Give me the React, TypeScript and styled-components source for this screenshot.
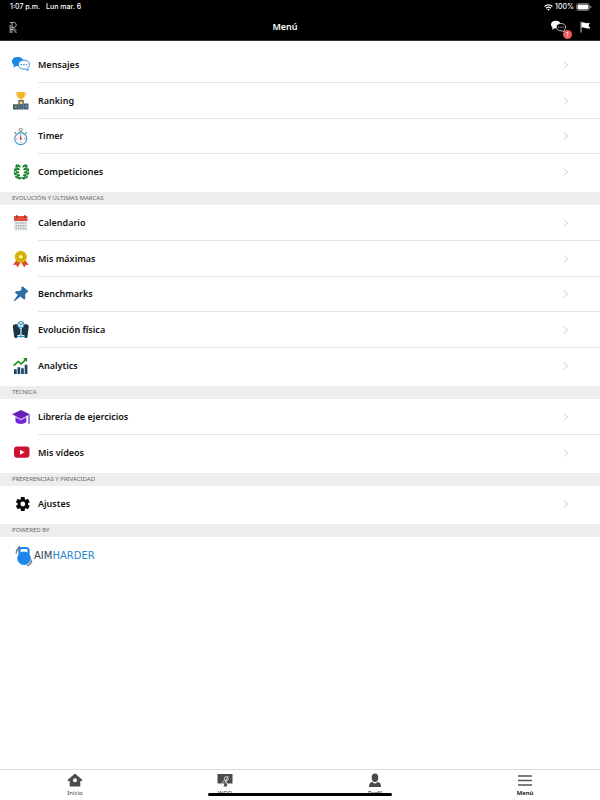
import React from "react";
import styled, { createGlobalStyle } from "styled-components";

const GlobalStyle = createGlobalStyle`
  * { box-sizing: border-box; }
  body { margin: 0; background: #fff; font-family: "Noto Sans", "Open Sans", sans-serif; color: #111; }
  a { color: inherit; text-decoration: none; }
  svg { display: block; }
`;

const Page = styled.div`
  min-height: 100vh;
  display: flex;
  flex-direction: column;
`;
const Header = styled.header`
  background: #000;
  color: #fff;
  border-bottom: 1px solid #333;
`;
const StatusBar = styled.div`
  display: flex;
  align-items: center;
  height: 14px;
  padding: 0 8px 0 10px;
  font: 500 7px/14px Inter, sans-serif;
`;
const StatusDate = styled.span`
  margin-left: 6px;
  flex: 1;
`;
const StatusIcons = styled.div`
  display: flex;
  align-items: center;
  gap: 2px;
`;
const TitleBar = styled.div`
  display: grid;
  grid-template-columns: 1fr auto 1fr;
  align-items: center;
  height: 26px;
  padding: 0 9px;
`;
const Title = styled.h1`
  margin: 0;
  padding-right: 30px;
  font-size: 9px;
  line-height: 14px;
  font-weight: 600;
`;
const HeaderActions = styled.div`
  display: flex;
  justify-content: flex-end;
  align-items: center;
  gap: 14px;
`;
const IconButton = styled.button`
  position: relative;
  display: block;
  padding: 0;
  border: 0;
  background: none;
  color: #fff;
`;
const BrandButton = styled(IconButton)`
  justify-self: start;
`;
const Badge = styled.span`
  position: absolute;
  right: -6px;
  bottom: -4px;
  width: 9px;
  height: 9px;
  border-radius: 50%;
  background: #f0595d;
  font: 400 7px/9px "Open Sans", sans-serif;
  text-align: center;
`;
const Content = styled.main`
  flex: 1;
`;
const Group = styled.ul<{ $first?: boolean }>`
  list-style: none;
  margin: 0;
  padding: ${(p) => (p.$first ? 6 : 0)}px 0 3px;
`;
const RowLink = styled.a`
  display: flex;
  align-items: center;
  height: 36px;
  padding-left: 12px;
`;
const RowBody = styled.span`
  flex: 1;
  align-self: stretch;
  display: flex;
  align-items: center;
  justify-content: space-between;
  margin-left: 8px;
  padding-right: 30px;
  border-bottom: 1px solid #e4e4e4;
  font-size: 9px;
  line-height: 14px;
  font-weight: 600;
  color: #111;
`;
const Item = styled.li`
  &:nth-child(3n) ${RowLink}, &:last-child ${RowLink} { height: 35px; }
  &:last-child ${RowBody} { border-bottom: 0; }
`;
const SectionTitle = styled.h2`
  margin: 0;
  padding-left: 12px;
  background: #ededed;
  color: #666;
  font-size: 6px;
  line-height: 13px;
  font-weight: 400;
  text-transform: uppercase;
`;
const Powered = styled.a`
  display: inline-block;
  margin: 8px 0 0 15px;
`;
const TabBar = styled.nav`
  position: sticky;
  bottom: 0;
  display: grid;
  grid-template-columns: repeat(4, 1fr);
  height: 31px;
  border-top: 1px solid #dcdcdc;
  background: #fff;
`;
const Tab = styled.a<{ $active?: boolean }>`
  display: flex;
  flex-direction: column;
  align-items: center;
  padding-top: 3px;
  font-size: 6px;
  line-height: 8px;
  font-weight: ${(p) => (p.$active ? 600 : 400)};
  color: ${(p) => (p.$active ? "#000" : "#333")};
`;
const HomeIndicator = styled.div`
  position: absolute;
  left: 50%;
  bottom: 4px;
  width: 184px;
  height: 3px;
  margin-left: -92px;
  border-radius: 2px;
  background: #000;
`;

const Icon = ({ children, size = 18 }: { children: React.ReactNode; size?: number }) => (
  <svg width={size} height={size} viewBox="0 0 18 18" fill="none" aria-hidden="true">
    {children}
  </svg>
);

const Bubbles = ({ main, outline, back, size }: { main: string; outline: string; back: string; size?: number }) => (
  <Icon size={size}>
    <path d="M5.500 1C2.200 1 0 3 0 5.500c0 1.500.8 2.700 1.800 3.500L1.300 11.800 4.300 10h3.500l3.700-4.500C11.500 3 9 1 5.500 1z" fill={main} />
    <path d="M12 4.200c3.300 0 5.500 1.800 5.500 4.400 0 1.400-.7 2.500-1.800 3.300l.5 2.700-3-1.600c-4 .4-6.900-1.600-6.900-4.400 0-2.600 2.400-4.400 5.700-4.400z" fill={back} stroke={outline} strokeWidth="1" />
    <path d="M8.700 8.600h1.300m1.300 0h1.300m1.300 0h1.300" stroke={outline} strokeWidth="1.200" />
  </Icon>
);

const Podium = () => (
  <Icon>
    <path d="M5.500 0h7v4.500c0 3-7 3-7 0zM8.200 6h1.600v2H8.200z" fill="#f5b62a" />
    <path d="M6 1H4.300c0 2 .7 3 2.200 3M12 1h1.700c0 2-.7 3-2.200 3" stroke="#f5b62a" />
    <path d="M6.300 8h5.500v9.500H6.300z" fill="#536674" />
    <path d="M1 12.300h5.500v5.200H1z" fill="#405463" />
    <path d="M11.800 11.500H16.500v6h-4.700z" fill="#465f79" />
    <circle cx="9.100" cy="10.700" r="1.600" fill="#ffd54a" />
    <circle cx="3.700" cy="14.700" r="1.200" fill="#73b66b" />
    <circle cx="14.200" cy="14.200" r="1.200" fill="#5c8eb9" />
  </Icon>
);
const Stopwatch = () => (
  <Icon>
    <circle cx="8.700" cy="1.700" r="1.600" stroke="#666" strokeWidth=".8" />
    <path d="M8.700 3.200V4.500M2.700 4.500l1.200 1M14.700 4.500l-1.200 1" stroke="#3a718e" strokeWidth="1.200" />
    <circle cx="8.700" cy="10.700" r="6" fill="#f4fafc" stroke="#4a9ac5" strokeWidth="1.200" />
    <path d="M8.700 6.200v1.200M8.700 14v1.200M4.200 10.700h1.200m6.600 0h1.200" stroke="#66777e" strokeWidth=".7" />
    <path d="M8.700 7.500v3.700" stroke="#d43b3b" />
    <circle cx="8.700" cy="10.700" r="1.100" fill="#c44" />
  </Icon>
);
const leaves: [number, number, number][] = [
  [7, 3, -50], [4.500, 3, 25], [6, 6, -65], [3, 6.800, 0], [5.500, 9.300, -80],
  [3, 10.800, -35], [6.300, 12.200, -95], [4.800, 14.300, -70], [7.800, 15.300, -105],
];
const Laurel = () => (
  <Icon>
    {[false, true].map((flip) => (
      <g key={String(flip)} transform={flip ? "translate(19 0) scale(-1 1)" : undefined}>
        <path d="M7 2.300C3 6 3.500 12.500 8.800 15.500" stroke="#188a24" strokeWidth="1" />
        {leaves.map(([x, y, r], i) => (
          <ellipse key={i} cx={x} cy={y} rx="1" ry="1.900" fill="#128020" transform={`rotate(${r} ${x} ${y})`} />
        ))}
      </g>
    ))}
  </Icon>
);
const CalendarIcon = () => (
  <Icon>
    <path d="M2 5h13.500v11.500H2z" fill="#e6eaeb" />
    <path d="M2 2h13.500v5H2z" fill="#e14b3b" />
    <path d="M4.800 1v3m8-3v3" stroke="#9d2c24" strokeWidth="1.200" />
    <path d="M3.500 9h10.700M3.500 11.700h10.700M3.500 14.400h10.700" stroke="#a6b0b5" strokeWidth="1.500" strokeDasharray="1.500 .8" />
  </Icon>
);
const Medal = () => (
  <Icon>
    <path d="M4.500 10 1 15l3-.2L5.500 17.500 9 12zm8.500 0 3.800 5-3-.2-1.500 2.700L9 12z" fill="#dd4c29" />
    <circle cx="8.800" cy="6.800" r="6.100" fill="#dcb90f" />
    <circle cx="8.800" cy="6.800" r="3.200" fill="#e8ce35" stroke="#b5980f" strokeWidth="1" />
    <circle cx="8.800" cy="6.800" r="1.500" fill="#fff4a0" />
  </Icon>
);
const Pushpin = () => (
  <Icon>
    <path d="M9.300 1.300c.4-.9 1.500-1 2.200-.4l4.300 3.800c.7.700.2 1.600-.7 1.700l-.9.300-1.300 2.600c.9 1.500.7 3.300-.6 4.400L8.300 10.600 2.500 15.200 1.800 14.600l4-5.700L2.900 6.400c1.200-1.500 3-1.800 4.700-1.200l1.900-1.900z" fill="#2e6da4" />
  </Icon>
);
const BodyScale = () => (
  <Icon>
    <path d="M.8 6C.8 4 2 3.300 3.500 3.300h10.500c1.600 0 2.700.7 2.700 2.700L15.500 15.500c-.2 1-.8 1.500-1.800 1.500H4c-1 0-1.600-.5-1.800-1.500z" fill="#1f3442" />
    <path d="M7 6h3.600L9.700 8.200v5.300l3 1V17H5v-2.500l3-1V8.200z" fill="#eaf8ff" />
    <path d="M5 15.500h8M8.900 8v8.500" stroke="#248bbd" />
    <circle cx="8.800" cy="3.700" r="3.200" fill="#c8ebfa" stroke="#2f8fc1" strokeWidth="1" />
    <path d="M8.800 3.700 7.300 2.400M8.800 3.700l1.700-.8" stroke="#1f3442" strokeWidth=".8" />
  </Icon>
);
const Chart = () => (
  <Icon>
    <path d="M2 12.200h2.700V17H2zm3.500-2h2.700V17H5.500zm3.600 1h2.700V17H9.100zM12.700 7.700h2.700V17h-2.700z" fill="#1d4666" />
    <path d="m1.700 8.700 4.500-4.200 3 2.500 5-5" stroke="#168c1b" strokeWidth="1.600" />
    <path d="M11 1h4v4z" fill="#168c1b" />
  </Icon>
);
const Graduation = () => (
  <Icon>
    <path d="M3.500 8.300v5.400c2.500 3 8.300 3 10.800 0V8.300L9 11z" fill="#7422dc" />
    <path d="m0 6.300 9-4.300 8.800 4.300L9 10.700z" fill="#6520b9" />
    <path d="m3.500 9 5.500 3 5.300-3" stroke="#fff" strokeWidth=".7" />
    <path d="M17 6.500v9.200" stroke="#6520b9" strokeWidth="1.200" />
  </Icon>
);
const Video = () => (
  <Icon>
    <rect x="2" y="2.500" width="15.500" height="11.300" rx="3" fill="#ce1130" />
    <path d="m8 5.700 4.500 2.500L8 10.700z" fill="#fff" />
  </Icon>
);
const Gear = () => (
  <Icon>
    <g fill="#080808" transform="translate(1.800 0)">
      <circle cx="9" cy="9" r="5.200" />
      {[0, 60, 120].map((r) => (
        <rect key={r} x="7" y="2" width="4" height="14" rx=".7" transform={`rotate(${r} 9 9)`} />
      ))}
      <circle cx="9" cy="9" r="2.400" fill="#fff" />
    </g>
  </Icon>
);
const Chevron = () => (
  <svg width="8" height="10" viewBox="0 0 8 10" fill="none" aria-hidden="true">
    <path d="m2 1.500 3.500 3.500L2 8.500" stroke="#c9c9c9" />
  </svg>
);

type Entry = { label: string; icon: React.ReactNode };
const groups: { title?: string; entries: Entry[] }[] = [
  {
    entries: [
      { label: "Mensajes", icon: <Bubbles main="#1c87e5" outline="#2a8de0" back="#fff" /> },
      { label: "Ranking", icon: <Podium /> },
      { label: "Timer", icon: <Stopwatch /> },
      { label: "Competiciones", icon: <Laurel /> },
    ],
  },
  {
    title: "Evolución y últimas marcas",
    entries: [
      { label: "Calendario", icon: <CalendarIcon /> },
      { label: "Mis máximas", icon: <Medal /> },
      { label: "Benchmarks", icon: <Pushpin /> },
      { label: "Evolución física", icon: <BodyScale /> },
      { label: "Analytics", icon: <Chart /> },
    ],
  },
  {
    title: "Técnica",
    entries: [
      { label: "Librería de ejercicios", icon: <Graduation /> },
      { label: "Mis vídeos", icon: <Video /> },
    ],
  },
  { title: "Preferencias y privacidad", entries: [{ label: "Ajustes", icon: <Gear /> }] },
];

const TabIcon = ({ children }: { children: React.ReactNode }) => (
  <svg width="16" height="16" viewBox="0 0 16 16" fill="none" aria-hidden="true">
    {children}
  </svg>
);
const tabs: { label: string; active?: boolean; icon: React.ReactNode }[] = [
  {
    label: "Inicio",
    icon: (
      <TabIcon>
        <path fillRule="evenodd" d="M8 .5 15.500 7l-.9 1.200-1.300-.5V13.500H2.700V7.700l-1.300.5L.5 7zM8 5.300a2 2 0 1 0 0 4 2 2 0 0 0 0-4z" fill="#4b4b4b" />
      </TabIcon>
    ),
  },
  {
    label: "WOD",
    icon: (
      <TabIcon>
        <path d="M.5 1h15v9.500H10v3H6.500l1-3h-7z" fill="#4b4b4b" />
        <circle cx="9.300" cy="5.700" r="2" stroke="#d5d5d5" />
        <path d="m3.500 12.500 4-5.500M8 10l3-7M9 8l1.500 4" stroke="#d5d5d5" strokeWidth=".9" />
      </TabIcon>
    ),
  },
  {
    label: "Perfil",
    icon: (
      <TabIcon>
        <ellipse cx="8" cy="4.700" rx="3.300" ry="4.200" fill="#4b4b4b" />
        <path d="M2 14c0-3 .8-4.600 3.300-5L8 10.800 10.700 9C13.200 9.400 14 11 14 14z" fill="#4b4b4b" />
      </TabIcon>
    ),
  },
  {
    label: "Menú",
    active: true,
    icon: (
      <TabIcon>
        <path d="M1 3h14M1 7.500h14M1 12h14" stroke="#555" strokeWidth="1.500" />
      </TabIcon>
    ),
  },
];

export default function App() {
  return (
    <Page>
      <GlobalStyle />
      <Header>
        <StatusBar>
          <span>1:07 p.m.</span>
          <StatusDate>Lun mar. 6</StatusDate>
          <StatusIcons>
            <svg width="9" height="7" viewBox="0 0 9 7" fill="none" stroke="#fff" aria-hidden="true">
              <path d="M.6 2.500c2.200-2.200 5.600-2.200 7.800 0M2 4.200c1.500-1.400 3.500-1.400 5 0" strokeWidth="1.200" />
              <path d="M3.200 5.300c.8-.7 1.800-.7 2.600 0L4.500 6.800z" fill="#fff" stroke="none" />
            </svg>
            <span>100%</span>
            <svg width="16" height="8" viewBox="0 0 16 8" fill="none" aria-hidden="true">
              <rect x=".5" y=".5" width="13" height="7" rx="2" stroke="#888" strokeWidth=".8" />
              <rect x="1.500" y="1.500" width="11" height="5" rx="1.200" fill="#fff" />
              <path d="M14.800 3v2" stroke="#999" />
            </svg>
          </StatusIcons>
        </StatusBar>
        <TitleBar>
          <BrandButton aria-label="Inicio">
            <svg width="9" height="13" viewBox="0 0 9 13" fill="none" stroke="#c8c8c8" strokeWidth=".9" aria-hidden="true">
              <path d="M1 1.500h3.800c3.200 0 3.200 4.800 0 4.800H3M3 1.500V12M1.200 4v8M1 8.300h3L7.500 12M4 6.300 7.500 10" />
            </svg>
          </BrandButton>
          <Title>Menú</Title>
          <HeaderActions>
            <IconButton aria-label="Mensajes">
              <Bubbles main="#fff" outline="#ddd" back="#000" size={15} />
              <Badge>1</Badge>
            </IconButton>
            <IconButton aria-label="Avisos">
              <svg width="11" height="12" viewBox="0 0 11 12" fill="none" aria-hidden="true">
                <path d="M1 .5v11" stroke="#bbb" />
                <path d="M1.500 1.500C4 .5 5 3 9.800 1.800L8.500 4.500l1.800 2.700C6 8.500 5 5.500 1.500 6.800z" fill="#fff" />
              </svg>
            </IconButton>
          </HeaderActions>
        </TitleBar>
      </Header>
      <Content>
        {groups.map((group, g) => (
          <section key={g}>
            {group.title && <SectionTitle>{group.title}</SectionTitle>}
            <Group $first={g === 0}>
              {group.entries.map((entry) => (
                <Item key={entry.label}>
                  <RowLink href="#">
                    {entry.icon}
                    <RowBody>
                      {entry.label}
                      <Chevron />
                    </RowBody>
                  </RowLink>
                </Item>
              ))}
            </Group>
          </section>
        ))}
        <section>
          <SectionTitle>Powered by</SectionTitle>
          <Powered href="#" aria-label="Aimharder">
            <svg width="86" height="22" viewBox="0 0 86 22" fill="none">
              <path d="M4.500 9V5.500C4.500 3 5.500 3 7 3h4c1.500 0 2.500 0 2.500 2.500V9" stroke="#1d86e8" strokeWidth="2.200" />
              <circle cx="9" cy="13.200" r="6.700" fill="#1d86e8" />
              <path d="M1.200 9C.8 5.500 2.500 2.500 5 1M2.600 6.500C3 4.500 3.600 3 5 2M16.400 14.500c0 2.500-2 5-4.700 6.200M17 16c-.5 2-2 4-4 5" stroke="#31475b" strokeWidth=".8" />
              <text x="19" y="14" fontFamily="DejaVu Sans, sans-serif" fontSize="10" fill="#343f49">
                AIM<tspan fill="#2a87d0">HARDER</tspan>
              </text>
            </svg>
          </Powered>
        </section>
      </Content>
      <TabBar>
        {tabs.map((tab) => (
          <Tab key={tab.label} href="#" $active={tab.active}>
            {tab.icon}
            {tab.label}
          </Tab>
        ))}
        <HomeIndicator />
      </TabBar>
    </Page>
  );
}
